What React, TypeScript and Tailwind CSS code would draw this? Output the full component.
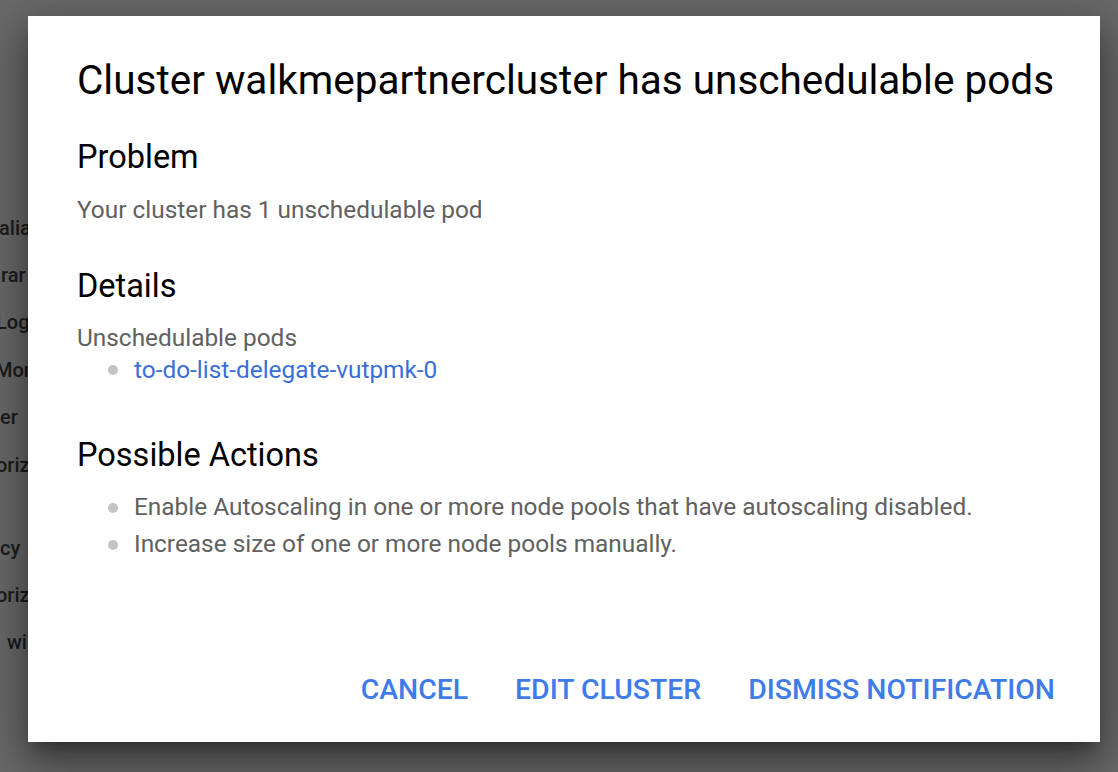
import React from 'react'

// fragments of the page that sits under the scrim: [text, center y, left x]
const pageItems: [string, number, number][] = [
  ['alia', 228, -1],
  ['rar', 275, 1],
  ['Log', 322, -4],
  ['Mon', 370, -5],
  ['er', 417, 0],
  ['oriz', 465, -4],
  ['cy', 548, 0],
  ['oriz', 595, -4],
  ['wi', 642, 7],
]

function Bullet() {
  return <span className="w-[10px] h-[10px] shrink-0 rounded-full bg-[#c4c4c4]" />
}

export default function App() {
  return (
    <div
      className="relative w-[1118px] h-[772px] overflow-hidden bg-[#6a6a6a]"
      style={{ fontFamily: 'Roboto, "Liberation Sans", sans-serif' }}
    >
      {/* dimmed page behind the dialog */}
      <div className="absolute left-0 top-0 w-[60px] h-full text-[20px] leading-[24px] text-[#1c1c1c] font-medium">
        {pageItems.map(([t, y, x], i) => (
          <div key={i} className="absolute whitespace-nowrap" style={{ top: y - 12, left: x }}>
            {t}
          </div>
        ))}
      </div>

      {/* dialog */}
      <div className="absolute left-[28px] top-[16px] w-[1072px] h-[726px] bg-white shadow-[0_11px_15px_-7px_rgba(0,0,0,0.35),0_24px_38px_3px_rgba(0,0,0,0.25),0_9px_46px_8px_rgba(0,0,0,0.22)] flex flex-col pl-[49px] pr-[45px]">
        <h1 className="mt-[40px] text-[40.5px] leading-[48px] text-[#000] font-normal whitespace-nowrap">
          Cluster walkmepartnercluster has unschedulable pods
        </h1>

        <h2 className="mt-[33px] text-[32.5px] leading-[40px] text-[#000]">Problem</h2>
        <p className="mt-[17px] text-[24.4px] leading-[32px] text-[#616161]">
          Your cluster has 1 unschedulable pod
        </p>

        <h2 className="mt-[40px] text-[32.5px] leading-[40px] text-[#000]">Details</h2>
        <p className="mt-[16px] text-[24.4px] leading-[32px] text-[#616161]">Unschedulable pods</p>
        <ul className="pl-[31px]">
          <li className="flex items-center gap-[16px] h-[32px] text-[24.4px]">
            <Bullet />
            <a className="text-[#3b6fd8]">to-do-list-delegate-vutpmk-0</a>
          </li>
        </ul>

        <h2 className="mt-[49px] text-[32.5px] leading-[40px] text-[#000]">Possible Actions</h2>
        <ul className="mt-[14px] pl-[31px] flex flex-col text-[24.4px] text-[#616161]">
          <li className="flex items-center gap-[16px] h-[37px]">
            <Bullet />
            Enable Autoscaling in one or more node pools that have autoscaling disabled.
          </li>
          <li className="flex items-center gap-[16px] h-[37px]">
            <Bullet />
            Increase size of one or more node pools manually.
          </li>
        </ul>

        <div className="mt-auto mb-[34px] flex justify-end gap-[47px] text-[28.4px] leading-[36px] font-medium text-[#3f7ce8]">
          <button>CANCEL</button>
          <button>EDIT CLUSTER</button>
          <button>DISMISS NOTIFICATION</button>
        </div>
      </div>
    </div>
  )
}
